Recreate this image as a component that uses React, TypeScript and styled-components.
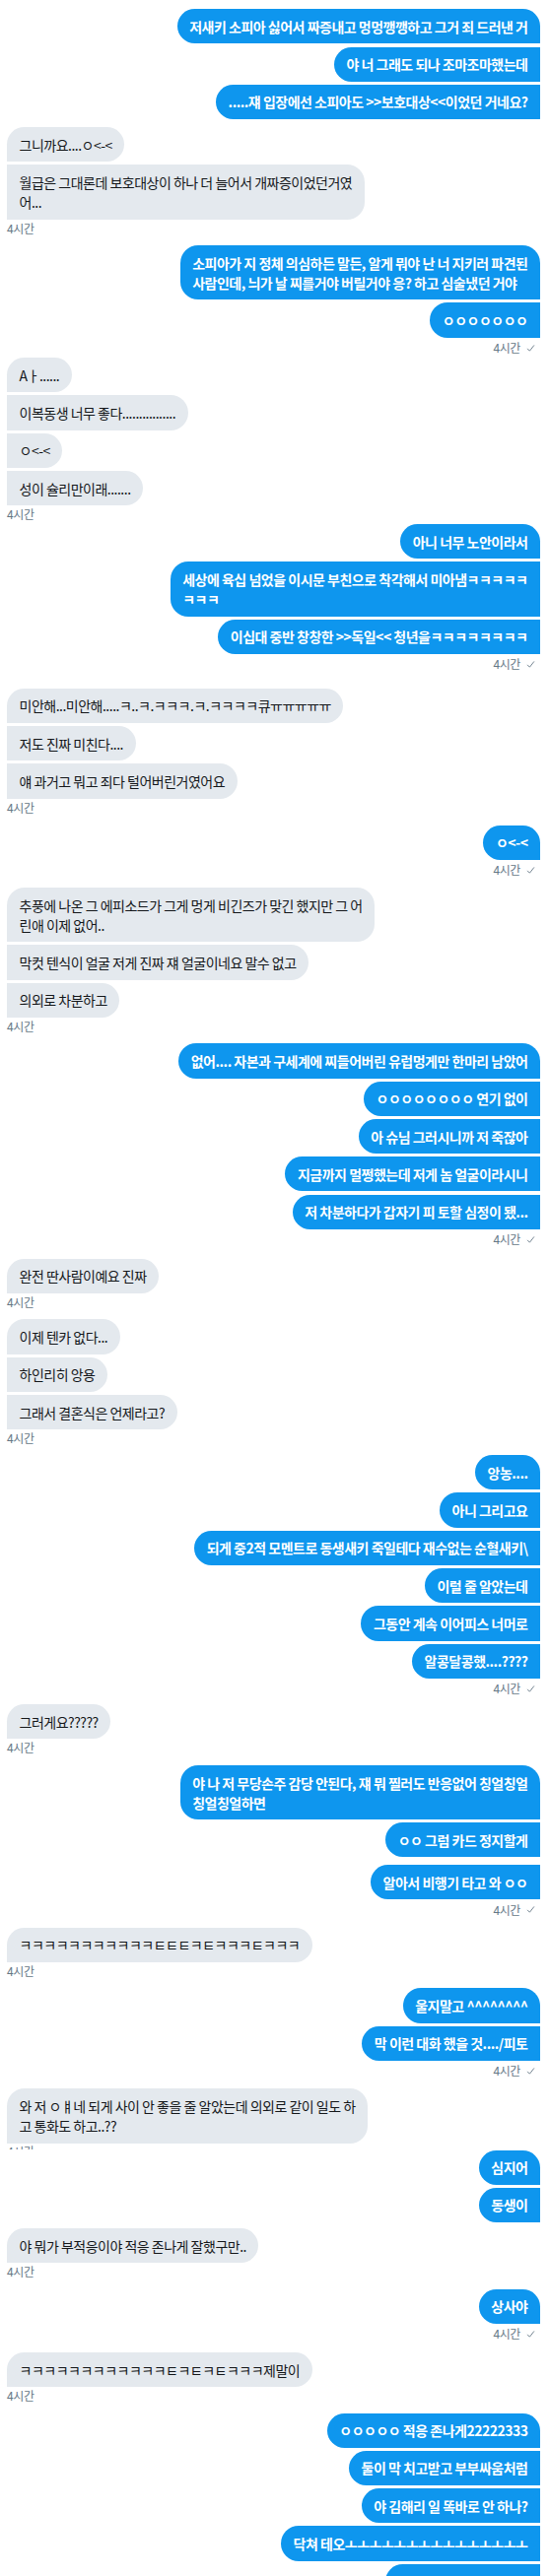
import React from "react";
import styled, { createGlobalStyle, css } from "styled-components";

type Side = "me" | "them";
type MetaKind = "full" | "clipped" | "none";

interface Msg {
  text: string;
  extraTop?: number;
}

interface GroupData {
  side: Side;
  msgs: (string | Msg)[];
  meta: MetaKind;
  after: number;
  divider?: boolean;
  partialWidth?: number;
}

const GlobalStyle = createGlobalStyle`
  html, body {
    margin: 0;
    padding: 0;
    background: #ffffff;
  }
  body {
    font-family: "Noto Sans CJK KR", "Liberation Sans", sans-serif;
    -webkit-font-smoothing: antialiased;
  }
`;

const Thread = styled.main`
  box-sizing: border-box;
  width: 557px;
  height: 2615px;
  overflow: hidden;
  padding: 9.3px 9px 0 7px;
  display: flex;
  flex-direction: column;
`;

const Group = styled.section<{ $side: Side; $after: number }>`
  display: flex;
  flex-direction: column;
  align-items: ${(p) => (p.$side === "me" ? "flex-end" : "flex-start")};
  margin-bottom: ${(p) => p.$after}px;
`;

const Stack = styled.div<{ $side: Side }>`
  display: flex;
  flex-direction: column;
  align-items: ${(p) => (p.$side === "me" ? "flex-end" : "flex-start")};
  gap: 3.1px;
  width: 100%;
`;

const Bubble = styled.div<{ $side: Side; $first: boolean; $extraTop?: number; $w?: number }>`
  box-sizing: border-box;
  max-width: 400px;
  min-height: 35.2px;
  padding: 7.6px 12.5px;
  font-family: "Noto Sans CJK KR", sans-serif;
  font-size: 14px;
  line-height: 20px;
  letter-spacing: -0.5px;
  white-space: pre-line;
  border-radius: 18px;
  margin-top: ${(p) => p.$extraTop ?? 0}px;
  ${(p) => (p.$w ? css`width: ${p.$w}px;` : "")}
  ${(p) =>
    p.$side === "me"
      ? css`
          background: #0e96ee;
          color: #ffffff;
          font-weight: 700;
          border-bottom-right-radius: 0;
          ${!p.$first && css`border-top-right-radius: 0;`}
        `
      : css`
          background: #e4e9ee;
          color: #14171a;
          font-weight: 400;
          border-bottom-left-radius: 0;
          ${!p.$first && css`border-top-left-radius: 0;`}
        `}
`;

const Meta = styled.div<{ $side: Side; $clipped?: boolean }>`
  display: flex;
  align-items: center;
  gap: 6px;
  height: 16px;
  font-family: "Noto Sans CJK KR", sans-serif;
  font-size: 12px;
  line-height: 16px;
  letter-spacing: -0.4px;
  color: #657786;
  margin-top: ${(p) => (p.$side === "me" ? "2.5px" : "1px")};
  margin-right: ${(p) => (p.$side === "me" ? "5px" : "0")};
  ${(p) =>
    p.$clipped &&
    css`
      height: 6px;
      overflow: hidden;
      align-items: flex-start;
      margin-top: 0;
    `}
`;

const CheckIcon = styled.svg`
  width: 9px;
  height: 9px;
  flex: none;
`;

const Divider = styled.hr`
  border: 0;
  height: 1px;
  background: #dfe6ec;
  margin: 4.5px -9px 1.5px -7px;
`;

const Check = () => (
  <CheckIcon viewBox="0 0 10 10" aria-hidden="true">
    <path d="M1.2 5.4 L3.8 8 L8.8 1.6" fill="none" stroke="#657786" strokeWidth="1" />
  </CheckIcon>
);

const groups: GroupData[] = [
  {
    side: "me",
    msgs: [
      "저새키 소피아 싫어서 짜증내고 멍멍깽깽하고 그거 죄 드러낸 거",
      "야 너 그래도 되나 조마조마했는데",
      ".....쟤 입장에선 소피아도 >>보호대상<<이었던 거네요?",
    ],
    meta: "none",
    after: 8,
  },
  {
    side: "them",
    msgs: ["그니까요....ㅇ<-<", "월급은 그대론데 보호대상이 하나 더 늘어서 개짜증이었던거였\n어..."],
    meta: "full",
    after: 9.7,
  },
  {
    side: "me",
    msgs: [
      "소피아가 지 정체 의심하든 말든, 알게 뭐야 난 너 지키러 파견된\n사람인데, 늬가 날 찌를거야 버릴거야 응? 하고 심술냈던 거야",
      "ㅇㅇㅇㅇㅇㅇㅇ",
    ],
    meta: "full",
    after: 2,
  },
  {
    side: "them",
    msgs: ["Aㅏ......", "이복동생 너무 좋다................", "ㅇ<-<", "성이 슐리만이래......."],
    meta: "full",
    after: 2,
  },
  {
    side: "me",
    msgs: [
      "아니 너무 노안이라서",
      "세상에 육십 넘었을 이시문 부친으로 착각해서 미아냄ㅋㅋㅋㅋㅋ\nㅋㅋㅋ",
      "이십대 중반 창창한 >>독일<< 청년을ㅋㅋㅋㅋㅋㅋㅋㅋ",
    ],
    meta: "full",
    after: 16.3,
  },
  {
    side: "them",
    msgs: [
      "미안해...미안해.....ㅋ..ㅋ.ㅋㅋㅋ.ㅋ.ㅋㅋㅋㅋ큐ㅠㅠㅠㅠㅠ",
      "저도 진짜 미친다....",
      "얘 과거고 뭐고 죄다 털어버린거였어요",
    ],
    meta: "full",
    after: 10,
  },
  { side: "me", msgs: ["ㅇ<-<"], meta: "full", after: 10 },
  {
    side: "them",
    msgs: [
      "추풍에 나온 그 에피소드가 그게 멍게 비긴즈가 맞긴 했지만 그 어\n린애 이제 없어..",
      "막컷 텐식이 얼굴 저게 진짜 쟤 얼굴이네요 말수 없고",
      "의외로 차분하고",
    ],
    meta: "full",
    after: 9.5,
  },
  {
    side: "me",
    msgs: [
      "없어.... 자본과 구세계에 찌들어버린 유럽멍게만 한마리 남았어",
      "ㅇㅇㅇㅇㅇㅇㅇㅇ 연기 없이",
      "아 슈님 그러시니까 저 죽잖아",
      "지금까지 멀쩡했는데 저게 놈 얼굴이라시니",
      "저 차분하다가 갑자기 피 토할 심정이 됐...",
    ],
    meta: "full",
    after: 11.5,
  },
  { side: "them", msgs: ["완전 딴사람이예요 진짜"], meta: "full", after: 9.5 },
  {
    side: "them",
    msgs: ["이제 텐카 없다...", "하인리히 앙용", "그래서 결혼식은 언제라고?"],
    meta: "full",
    after: 9,
  },
  {
    side: "me",
    msgs: [
      "앙농....",
      "아니 그리고요",
      "되게 중2적 모멘트로 동생새키 죽일테다 재수없는 순혈새키\\",
      "이럴 줄 알았는데",
      "그동안 계속 이어피스 너머로",
      "알콩달콩했....????",
    ],
    meta: "full",
    after: 8,
  },
  { side: "them", msgs: ["그러게요?????"], meta: "full", after: 9.5 },
  {
    side: "me",
    msgs: [
      "야 나 저 무당손주 감당 안된다, 쟤 뭐 찔러도 반응없어 칭얼칭얼\n칭얼칭얼하면",
      "ㅇㅇ 그럼 카드 정지할게",
      { text: "알아서 비행기 타고 와 ㅇㅇ", extraTop: 4.5 },
    ],
    meta: "full",
    after: 10,
  },
  { side: "them", msgs: ["ㅋㅋㅋㅋㅋㅋㅋㅋㅋㅋㅋㅌㅌㅌㅋㅌㅋㅋㅋㅌㅋㅋㅋ"], meta: "full", after: 9.5 },
  { side: "me", msgs: ["울지말고 ^^^^^^^^", "막 이런 대화 했을 것..../피토"], meta: "full", after: 10 },
  {
    side: "them",
    msgs: ["와 저 ㅇㅒ네 되게 사이 안 좋을 줄 알았는데 의외로 같이 일도 하\n고 통화도 하고..??"],
    meta: "clipped",
    after: 1,
  },
  { side: "me", msgs: ["심지어", "동생이"], meta: "none", after: 0, divider: true },
  { side: "them", msgs: ["야 뭐가 부적응이야 적응 존나게 잘했구만.."], meta: "full", after: 9.5 },
  { side: "me", msgs: ["상사야"], meta: "full", after: 10.5 },
  { side: "them", msgs: ["ㅋㅋㅋㅋㅋㅋㅋㅋㅋㅋㅋㅋㅌㅋㅌㅋㅌㅋㅋㅋ제말이"], meta: "full", after: 9.5 },
  {
    side: "me",
    msgs: [
      "ㅇㅇㅇㅇㅇ 적응 존나게22222333",
      "둘이 막 치고받고 부부싸움처럼",
      "야 김해리 일 똑바로 안 하나?",
      "닥쳐 테오ㅗㅗㅗㅗㅗㅗㅗㅗㅗㅗㅗㅗㅗㅗㅗ",
    ],
    meta: "none",
    after: 0,
    partialWidth: 157,
  },
];

const MessageGroup: React.FC<{ g: GroupData }> = ({ g }) => (
  <>
    <Group $side={g.side} $after={g.after}>
      <Stack $side={g.side}>
        {g.msgs.map((m, i) => {
          const msg: Msg = typeof m === "string" ? { text: m } : m;
          return (
            <Bubble key={i} $side={g.side} $first={i === 0} $extraTop={msg.extraTop}>
              {msg.text}
            </Bubble>
          );
        })}
        {g.partialWidth ? <Bubble $side={g.side} $first={false} $w={g.partialWidth} /> : null}
      </Stack>
      {g.meta !== "none" && (
        <Meta $side={g.side} $clipped={g.meta === "clipped"}>
          <span>4시간</span>
          {g.side === "me" && <Check />}
        </Meta>
      )}
    </Group>
    {g.divider && <Divider />}
  </>
);

export default function App() {
  return (
    <>
      <GlobalStyle />
      <Thread>
        {groups.map((g, i) => (
          <MessageGroup key={i} g={g} />
        ))}
      </Thread>
    </>
  );
}
